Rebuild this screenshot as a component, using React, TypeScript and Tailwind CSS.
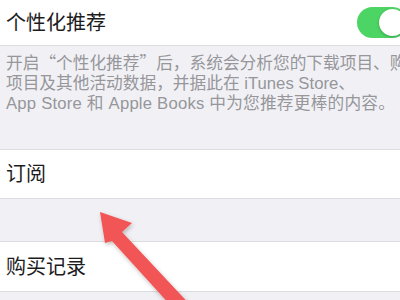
export default function App() {
  const font = { fontFamily: '"Liberation Sans", "Noto Sans CJK SC", sans-serif' };
  const cjk = { fontFamily: '"Noto Sans CJK SC", sans-serif' };
  return (
    <div className="relative w-[400px] h-[300px] overflow-hidden bg-[#f1f1f5]" style={font}>
      {/* 个性化推荐 */}
      <div className="flex h-[46px] items-center justify-between bg-white border-b border-[#dcdce0]">
        <span className="pl-[6px] text-[20px] text-[#1c1c1e] leading-none">个性化推荐</span>
        <div className="mr-[-8px] flex h-[31px] w-[51px] items-center justify-end rounded-full bg-[#4cd464] p-[2px]">
          <div className="h-[27px] w-[27px] rounded-full bg-white shadow-[0_1px_3px_rgba(0,0,0,0.25)]" />
        </div>
      </div>

      {/* 说明 */}
      <div className="h-[103px] px-[6px] pt-[6px] text-[16.7px] leading-[20px] text-[#96969b] whitespace-nowrap">
        <div>
          开启<span style={cjk}>“</span>个性化推荐<span style={cjk}>”</span>后，系统会分析您的下载项目、购买
        </div>
        <div>项目及其他活动数据，并据此在 iTunes Store、</div>
        <div className="tracking-[0.2px]">App Store 和 Apple Books 中为您推荐更棒的内容。</div>
      </div>

      {/* 订阅 */}
      <div className="flex h-[50px] items-center bg-white border-y border-[#dcdce0]">
        <span className="pl-[6px] text-[20px] text-[#1c1c1e]">订阅</span>
      </div>

      <div className="h-[42px]" />

      {/* 购买记录 */}
      <div className="flex h-[51px] items-center bg-white border-y border-[#dcdce0]">
        <span className="pl-[6px] text-[20px] text-[#1c1c1e]">购买记录</span>
      </div>

      {/* 红色箭头 */}
      <svg className="absolute left-0 top-0" width="400" height="300" viewBox="0 0 400 300">
        <defs>
          <filter id="sh" x="-20%" y="-20%" width="140%" height="140%">
            <feDropShadow dx="1" dy="2" stdDeviation="2" floodColor="#000" floodOpacity="0.25" />
          </filter>
        </defs>
        <g filter="url(#sh)" fill="#f25555">
          <polygon points="100,212 132,223 122,232 195,310 182,318 112,241 105,243" />
        </g>
      </svg>
    </div>
  );
}
